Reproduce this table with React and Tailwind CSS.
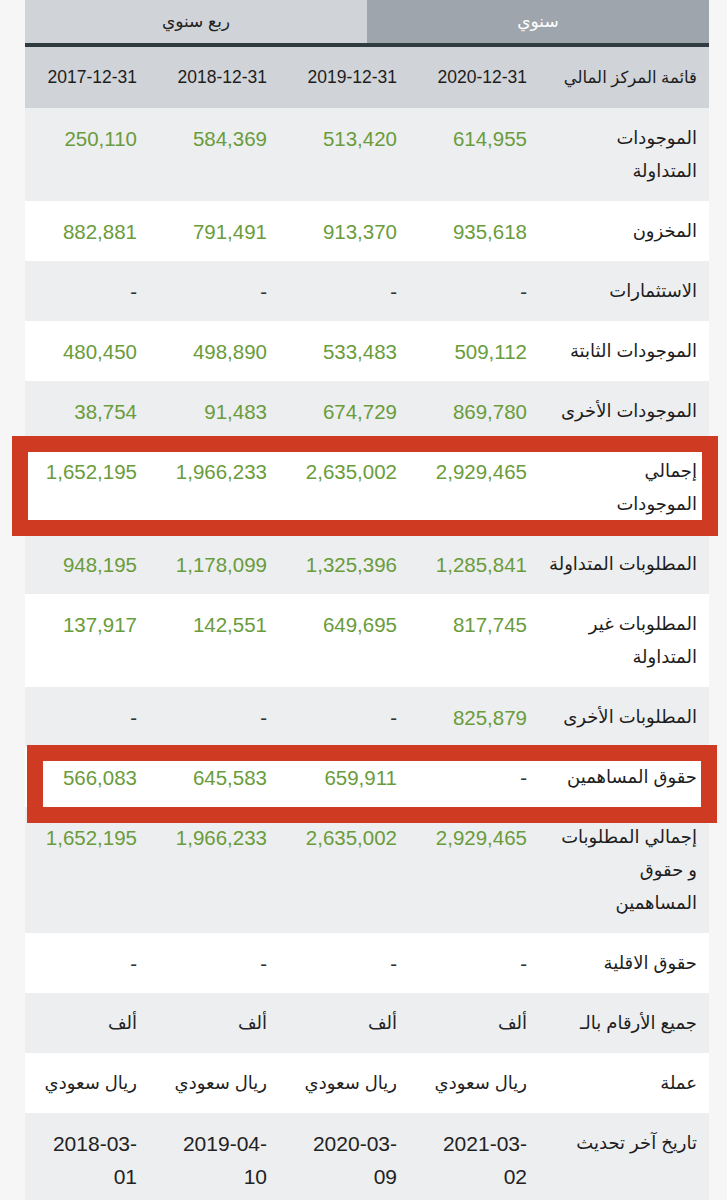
import React from 'react';

const FONT = { fontFamily: '"Liberation Sans", "DejaVu Sans", sans-serif' };

const DATES = ['2020-12-31', '2019-12-31', '2018-12-31', '2017-12-31'];

// each row: label lines, values, kind
const ROWS = [
  { label: ['الموجودات', 'المتداولة'], values: ['614,955', '513,420', '584,369', '250,110'] },
  { label: ['المخزون'], values: ['935,618', '913,370', '791,491', '882,881'] },
  { label: ['الاستثمارات'], values: ['-', '-', '-', '-'] },
  { label: ['الموجودات الثابتة'], values: ['509,112', '533,483', '498,890', '480,450'] },
  { label: ['الموجودات الأخرى'], values: ['869,780', '674,729', '91,483', '38,754'] },
  { label: ['إجمالي', 'الموجودات'], values: ['2,929,465', '2,635,002', '1,966,233', '1,652,195'] },
  { label: ['المطلوبات المتداولة'], values: ['1,285,841', '1,325,396', '1,178,099', '948,195'] },
  { label: ['المطلوبات غير', 'المتداولة'], values: ['817,745', '649,695', '142,551', '137,917'] },
  { label: ['المطلوبات الأخرى'], values: ['825,879', '-', '-', '-'] },
  { label: ['حقوق المساهمين'], values: ['-', '659,911', '645,583', '566,083'] },
  { label: ['إجمالي المطلوبات', 'و حقوق', 'المساهمين'], values: ['2,929,465', '2,635,002', '1,966,233', '1,652,195'] },
  { label: ['حقوق الاقلية'], values: ['-', '-', '-', '-'] },
  { label: ['جميع الأرقام بالـ'], values: ['ألف', 'ألف', 'ألف', 'ألف'], kind: 'text' },
  { label: ['عملة'], values: ['ريال سعودي', 'ريال سعودي', 'ريال سعودي', 'ريال سعودي'], kind: 'text' },
  {
    label: ['تاريخ آخر تحديث'],
    values: [['2021-03-', '02'], ['2020-03-', '09'], ['2019-04-', '10'], ['2018-03-', '01']],
    kind: 'date',
  },
];

const GRID = 'grid grid-cols-[170px_130px_130px_130px_1fr]';

function ValueCell({ value, kind }) {
  if (kind === 'text') {
    return <div className="pr-3 text-right text-[18px] text-[#222]">{value}</div>;
  }
  if (kind === 'date') {
    return (
      <div className="pr-3 text-right text-[21px] text-[#222]">
        {value.map((l) => (
          <div key={l} dir="ltr" className="text-right">{l}</div>
        ))}
      </div>
    );
  }
  const dash = value === '-';
  return (
    <div
      dir="ltr"
      className={`pr-3 text-right text-[20.5px] ${dash ? 'text-[#333]' : 'text-[#6a9c3c]'}`}
    >
      {value}
    </div>
  );
}

export default function App() {
  return (
    <div className="min-h-screen bg-[#f6f6f7] pl-[25px] pr-[18px]" style={FONT} dir="rtl">
      <div className="relative">
        {/* tabs */}
        <div className="grid grid-cols-2 h-[47px] border-b-4 border-[#2e3c41]">
          <div className="bg-[#9ea5ad] text-white text-[17px] flex items-center justify-center">سنوي</div>
          <div className="bg-[#d0d3d7] text-[#222] text-[17px] flex items-center justify-center">ربع سنوي</div>
        </div>

        {/* header */}
        <div className={`${GRID} h-[61px] items-center bg-[#d0d3d7] text-[#1d1d1d]`}>
          <div className="pr-3 text-right text-[16.5px]">قائمة المركز المالي</div>
          {DATES.map((d) => (
            <div key={d} dir="ltr" className="pr-3 text-right text-[17.5px]">{d}</div>
          ))}
        </div>

        {ROWS.map((row, i) => (
          <div
            key={i}
            className={`${GRID} py-[13.5px] leading-[33px] ${i % 2 === 0 ? 'bg-[#edeef0]' : 'bg-white'}`}
          >
            <div className="pr-3 text-right text-[18px] text-[#1d1d1d] whitespace-nowrap">
              {row.label.map((l) => (
                <div key={l}>{l}</div>
              ))}
            </div>
            {row.values.map((v, j) => (
              <ValueCell key={j} value={v} kind={row.kind} />
            ))}
          </div>
        ))}

        {/* red highlight marks */}
        <div className="absolute left-[-13px] top-[436px] w-[706px] h-[100px] border-[16px] border-[#cf3b22] pointer-events-none" />
        <div className="absolute left-[2px] top-[745px] w-[690px] h-[78px] border-[16px] border-[#cf3b22] pointer-events-none" />
      </div>
    </div>
  );
}
